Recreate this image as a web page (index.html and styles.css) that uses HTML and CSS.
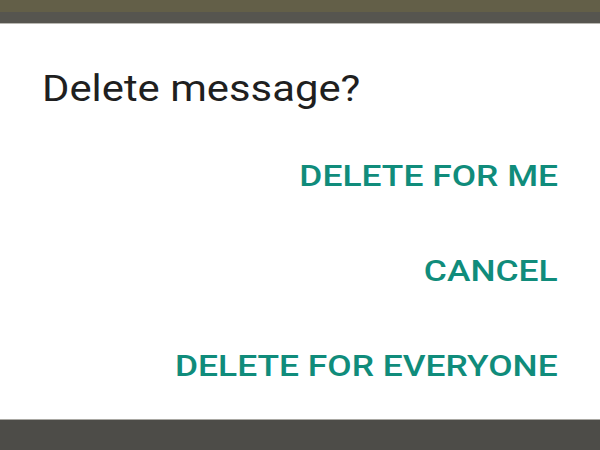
FILE: index.html
```html
<!DOCTYPE html>
<html>
<head>
<meta charset="utf-8">
<link rel="stylesheet" href="styles.css">
</head>
<body>
<div class="screen">
  <div class="top-bar">
    <div class="stripe-olive"></div>
    <div class="stripe-grey"></div>
  </div>
  <div class="dialog">
    <div class="title">Delete message?</div>
    <div class="actions">
      <div class="action">DELETE FOR ME</div>
      <div class="action">CANCEL</div>
      <div class="action">DELETE FOR EVERYONE</div>
    </div>
  </div>
  <div class="bottom-bar"></div>
</div>
</body>
</html>
```

FILE: styles.css
```css
html, body {
  margin: 0;
  padding: 0;
  background: #4d4c48;
}
.screen {
  width: 600px;
  height: 450px;
  display: flex;
  flex-direction: column;
  overflow: hidden;
}
.top-bar {
  display: flex;
  flex-direction: column;
}
.stripe-olive {
  height: 12px;
  background: #635f48;
}
.stripe-grey {
  height: 11px;
  background: #56554f;
  border-bottom: 1px solid #b9b8b2;
}
.dialog {
  background: #ffffff;
  height: 395px;
  padding: 46px 42px 0 42px;
  box-sizing: border-box;
  display: flex;
  flex-direction: column;
}
.title {
  font-family: Roboto, "Liberation Sans", sans-serif;
  font-size: 37px;
  line-height: 37px;
  color: #1f1f1f;
  transform: scaleX(1.13);
  transform-origin: left center;
}
.actions {
  display: flex;
  flex-direction: column;
  align-items: flex-end;
  gap: 66px;
  margin-top: 55px;
}
.action {
  font-family: Roboto, "Liberation Sans", sans-serif;
  font-weight: 500;
  font-size: 29px;
  line-height: 29px;
  color: #108c7b;
  transform: scaleX(1.22);
  transform-origin: right center;
}
.bottom-bar {
  flex: 1;
  background: #4d4c48;
  border-top: 1px solid #a9a8a3;
}
```
